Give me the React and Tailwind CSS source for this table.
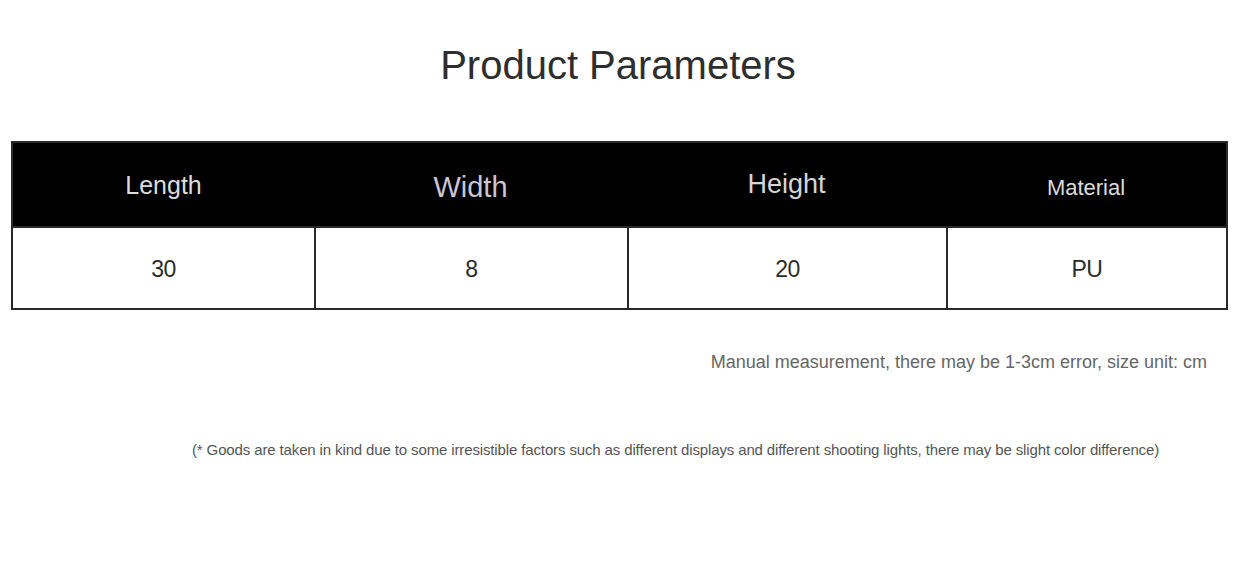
const HEADERS = [
  { label: "Length", cls: "text-[25px] text-[#dcdcdc] pt-[2px]" },
  { label: "Width", cls: "text-[29px] text-[#c9c8d2] pt-[6px]" },
  { label: "Height", cls: "text-[27px] text-[#d6d6d6]" },
  { label: "Material", cls: "text-[22px] text-[#dcdcdc] pt-[6px]" },
];

const VALUES = ["30", "8", "20", "PU"];

export default function App() {
  return (
    <div className="w-[1240px] h-[564px] bg-white overflow-hidden" style={{ fontFamily: '"Liberation Sans", Arial, sans-serif' }}>
      {/* Title */}
      <div className="pt-[40px] h-[141px] flex justify-center">
        <h1 className="text-[40px] leading-[50px] text-[#2e2e2e] ml-[-4px]">Product Parameters</h1>
      </div>

      {/* Table */}
      <div className="ml-[11px] w-[1217px] border-2 border-[#2a2a2a]">
        <div className="grid grid-cols-[301px_313px_319px_1fr] h-[83px] bg-black">
          {HEADERS.map((h) => (
            <div key={h.label} className={`flex items-center justify-center ${h.cls}`}>
              {h.label}
            </div>
          ))}
        </div>
        <div className="grid grid-cols-[301px_313px_319px_1fr] h-[82px] border-t-2 border-[#2a2a2a]">
          {VALUES.map((v, i) => (
            <div
              key={i}
              className={`flex items-center justify-center pt-[2px] text-[23px] text-[#2b2b2b] tracking-[-0.5px] ${i > 0 ? "border-l-2 border-[#2a2a2a]" : ""}`}
            >
              {v}
            </div>
          ))}
        </div>
      </div>

      {/* Notes */}
      <div className="mt-[40px] pr-[33px] flex justify-end">
        <p className="text-[18px] leading-[24px] text-[#666]">
          Manual measurement, there may be 1-3cm error, size unit: cm
        </p>
      </div>
      <div className="mt-[66px] pl-[192px]">
        <p className="text-[15px] leading-[20px] text-[#555] tracking-[-0.13px] whitespace-nowrap">
          (* Goods are taken in kind due to some irresistible factors such as different displays and different shooting lights, there may be slight color difference)
        </p>
      </div>
    </div>
  );
}
